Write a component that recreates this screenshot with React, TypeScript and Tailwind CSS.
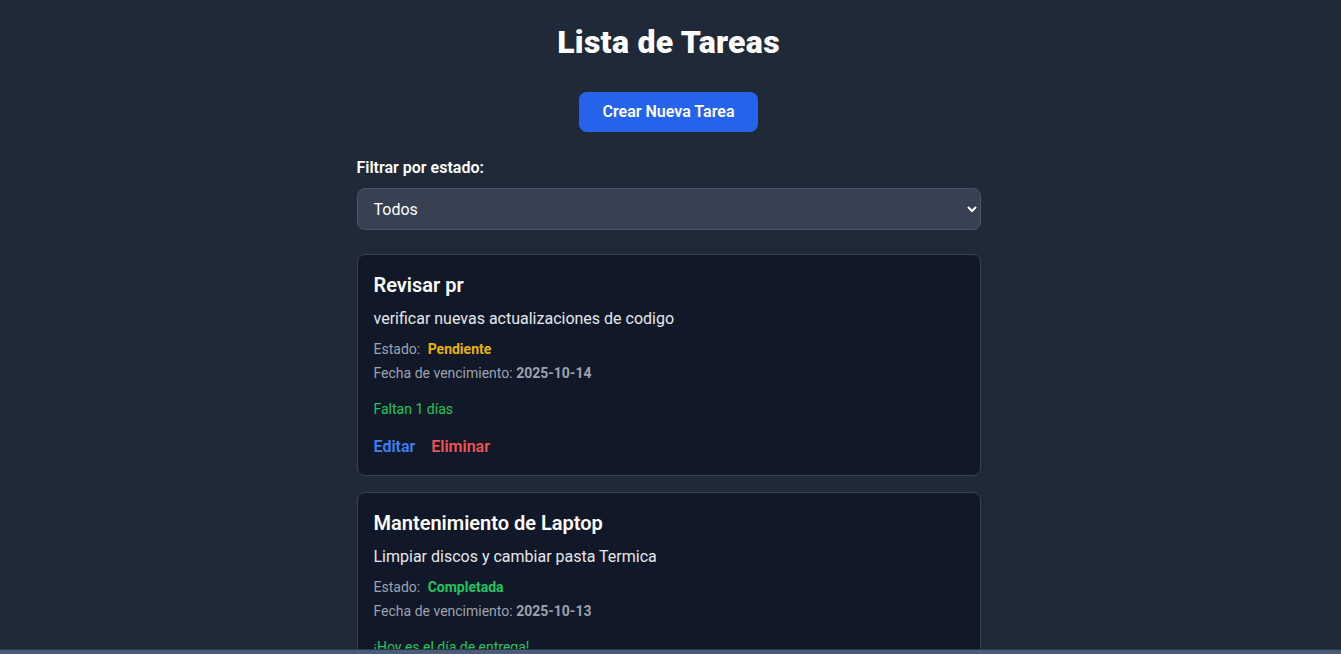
import React, { useState } from 'react'

interface Task {
    id: number
    title: string
    description: string
    status: 'Pendiente' | 'Completada'
    dueDate: string
    note: string
}

const tasks: Task[] = [
    {
        id: 1,
        title: 'Revisar pr',
        description: 'verificar nuevas actualizaciones de codigo',
        status: 'Pendiente',
        dueDate: '2025-10-14',
        note: 'Faltan 1 días',
    },
    {
        id: 2,
        title: 'Mantenimiento de Laptop',
        description: 'Limpiar discos y cambiar pasta Termica',
        status: 'Completada',
        dueDate: '2025-10-13',
        note: '¡Hoy es el día de entrega!',
    },
]

const TaskCard: React.FC<{ task: Task }> = ({ task }) => {
    return (
        <div className="bg-[#111827] border border-[#374151] rounded-lg p-4">
            <h2 className="text-xl font-semibold text-white mb-2">{task.title}</h2>
            <p className="text-base text-[#e5e7eb] mb-2">{task.description}</p>
            <p className="text-sm text-[#9ca3af]">
                Estado:{' '}
                <span
                    className={
                        task.status === 'Pendiente'
                            ? 'ml-1 font-bold text-[#eab308]'
                            : 'ml-1 font-bold text-[#22c55e]'
                    }
                >
                    {task.status}
                </span>
            </p>
            <p className="text-sm text-[#9ca3af] mt-1">
                Fecha de vencimiento: <span className="font-bold">{task.dueDate}</span>
            </p>
            <p className="text-sm text-[#22c55e] mt-4">{task.note}</p>
            <div className="flex gap-4 mt-4">
                <button className="text-base font-semibold text-[#3b82f6]">Editar</button>
                <button className="text-base font-semibold text-[#f05252]">Eliminar</button>
            </div>
        </div>
    )
}

const App: React.FC = () => {
    const [filter, setFilter] = useState('todos')

    return (
        <div
            className="min-h-screen bg-[#1f2937] text-white pr-1"
            style={{ fontFamily: 'Roboto, "Noto Sans", sans-serif' }}
        >
            <div className="max-w-2xl mx-auto p-6">
                <h1 className="text-[32px] leading-9 font-black text-center mb-8 tracking-[0.3px]">
                    Lista de Tareas
                </h1>
                <div className="flex justify-center mb-6">
                    <button className="bg-[#2563eb] text-white font-semibold text-base px-6 py-2 rounded-lg">
                        Crear Nueva Tarea
                    </button>
                </div>
                <label className="block text-base font-semibold mb-2">Filtrar por estado:</label>
                <select
                    value={filter}
                    onChange={(e) => setFilter(e.target.value)}
                    className="w-full h-[42px] bg-[#374151] border border-[#4b5563] rounded-lg px-3 text-base text-white mb-6"
                >
                    <option value="todos">Todos</option>
                    <option value="pendiente">Pendiente</option>
                    <option value="completada">Completada</option>
                </select>
                <div className="space-y-4">
                    {tasks.map((task) => (
                        <TaskCard key={task.id} task={task} />
                    ))}
                </div>
            </div>
            <div className="fixed bottom-0 left-0 right-0 h-[5px] bg-[#4a5d78] border-t border-[#2c3848]" />
        </div>
    )
}

export default App
